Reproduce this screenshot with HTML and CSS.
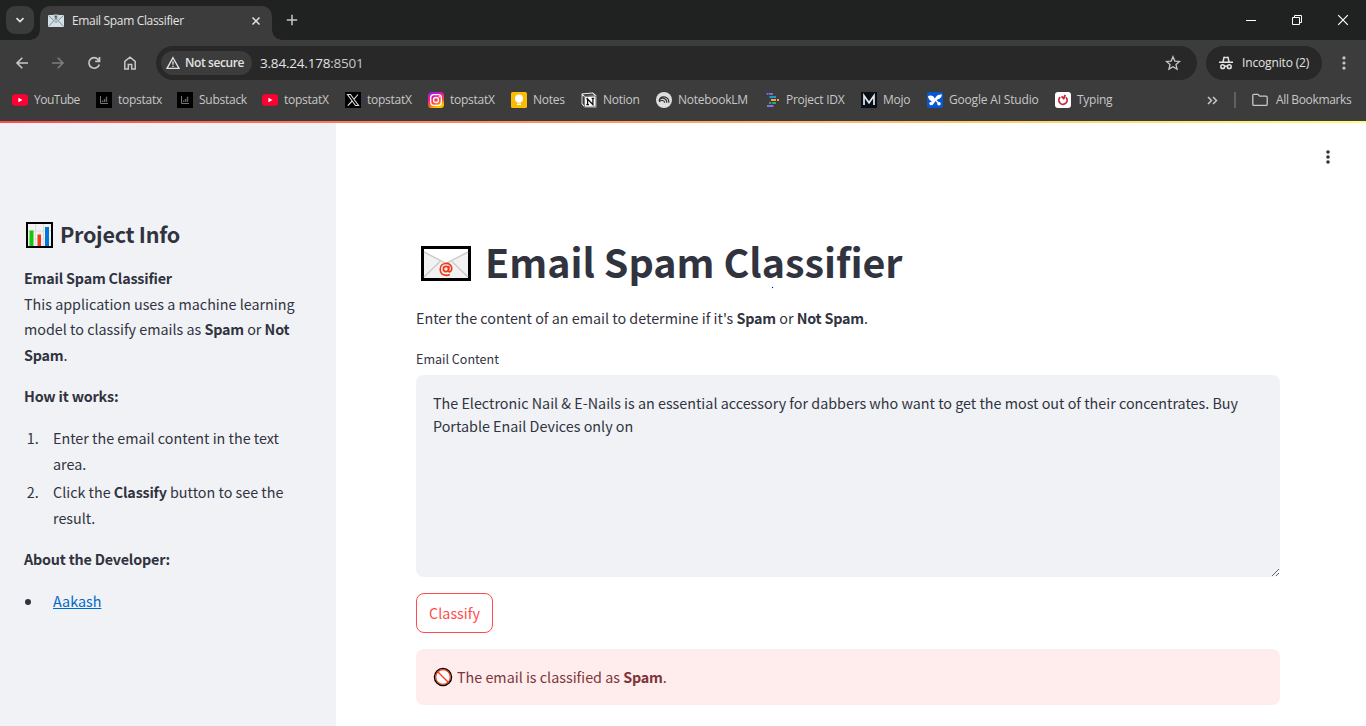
FILE: index.html
```html
<!DOCTYPE html>
<html lang="en">
<head>
<meta charset="utf-8">
<title>Email Spam Classifier</title>
<link rel="stylesheet" href="styles.css">
</head>
<body>
<header class="chrome">
  <div class="titlebar">
    <button class="tab-search" aria-label="Search tabs"><svg width="10" height="10" viewBox="0 0 10 10"><path d="M1.500 3.200 5 6.600 8.500 3.200" fill="none" stroke="#e3e3e3" stroke-width="1.700"/></svg></button>
    <div class="tab">
      <svg width="16" height="16" viewBox="0 0 16 16"><rect y="2" width="16" height="12" rx=".6" fill="#d5e0e6"/><path d="M.5 2.500 8 9.500l7.500-7M.5 13.500l5-5.500m10 5.500-5-5.500" fill="none" stroke="#78909c" stroke-width="1"/><path d="M5.500 1.500h5v4.700L8 8.600 5.500 6.200z" fill="#b9c8d0"/><path d="M8 3v3.500M6.800 3.400h2" stroke="#455a64" stroke-width="1.300"/></svg>
      <span class="tab-title">Email Spam Classifier</span>
      <svg class="tab-close" width="10" height="10" viewBox="0 0 10 10"><path d="m1.500 1.500 7 7m0-7-7 7" stroke="#e3e3e3" stroke-width="1.500"/></svg>
    </div>
    <svg class="new-tab" width="12" height="12" viewBox="0 0 12 12"><path d="M6 .8v10.400M.8 6h10.400" stroke="#c7c7c7" stroke-width="1.500"/></svg>
    <div class="window-controls">
      <svg width="12" height="12" viewBox="0 0 12 12"><path d="M1 6.500h10" stroke="#fff"/></svg>
      <svg width="12" height="12" viewBox="0 0 12 12"><path d="M1.500 3.500h7v7h-7zM3.500 3.500v-2h7v7h-2" fill="none" stroke="#fff"/></svg>
      <svg width="12" height="12" viewBox="0 0 12 12"><path d="m1.200 1.200 9.600 9.600m0-9.600-9.600 9.600" stroke="#fff" stroke-width="1.200"/></svg>
    </div>
  </div>
  <div class="toolbar">
    <nav class="nav">
      <svg width="16" height="16" viewBox="0 0 16 16"><path d="M14 8H3m5.300-5.300L3 8l5.300 5.300" fill="none" stroke="#c7c7c7" stroke-width="1.600"/></svg>
      <svg width="16" height="16" viewBox="0 0 16 16"><path d="M2 8h11M7.700 2.700 13 8l-5.300 5.300" fill="none" stroke="#7d7d7d" stroke-width="1.600"/></svg>
      <svg width="16" height="16" viewBox="0 0 16 16"><path d="M13.300 9.400A5.300 5.300 0 1 1 12.400 4.700L13 5.700M13.500 2v4.300H9.200" fill="none" stroke="#c7c7c7" stroke-width="1.700"/></svg>
      <svg width="16" height="16" viewBox="0 0 16 16"><path d="M2.800 14V6.300L8 2.200l5.200 4.100V14H9.700V9.500H6.300V14z" fill="none" stroke="#c7c7c7" stroke-width="1.500"/></svg>
    </nav>
    <div class="omnibox">
      <span class="security"><svg width="14" height="14" viewBox="0 0 14 14"><path d="M7 1.700 13 12.400H1z" fill="none" stroke="#e3e3e3" stroke-width="1.300"/><path d="M7 5.300v3.500m0 .9V11" stroke="#e3e3e3" stroke-width="1.300"/></svg><b>Not secure</b></span>
      <span class="url">3.84.24.178<i>:8501</i></span>
      <svg class="star" width="16" height="16" viewBox="0 0 16 16"><path d="m8 1.700 1.850 4.350 4.700.4-3.550 3.100 1.050 4.600L8 11.700l-4.050 2.450L5 9.550l-3.550-3.100 4.700-.4z" fill="none" stroke="#c7c7c7" stroke-width="1.300"/></svg>
    </div>
    <div class="incognito"><svg width="14" height="14" viewBox="0 0 14 14"><path d="M3.300 5.500 4.300 1q.2-.7 1-.5L7 1 8.700.5q.8-.2 1 .5l1 4.500H14V7H0V5.500z" fill="#e3e3e3"/><path d="M5.500 2.200h3L9 5.400H5z" fill="#282828"/><circle cx="3.700" cy="10.700" r="1.900" fill="none" stroke="#e3e3e3" stroke-width="1.500"/><circle cx="10.300" cy="10.700" r="1.900" fill="none" stroke="#e3e3e3" stroke-width="1.500"/><path d="M5.600 10.400q1.400-.8 2.800 0" fill="none" stroke="#e3e3e3" stroke-width="1.300"/></svg><span>Incognito (2)</span></div>
    <svg class="menu" width="4" height="14" viewBox="0 0 4 14" fill="#c7c7c7"><circle cx="2" cy="1.900" r="1.600"/><circle cx="2" cy="7" r="1.600"/><circle cx="2" cy="12.100" r="1.600"/></svg>
  </div>
  <div class="bookmarks">
    <div class="bookmark-list">
      <a><svg width="16" height="16" viewBox="0 0 16 16"><rect y="2.300" width="16" height="11.400" rx="3" fill="#ff0033"/><path d="M6.400 5.800 10.500 8l-4.100 2.200z" fill="#fff"/></svg><span>YouTube</span></a>
      <a><svg width="16" height="16" viewBox="0 0 16 16"><path d="M0 0h16v16H0z"/><path d="M4.500 4v7.500H12" fill="none" stroke="#777"/><path d="M6.500 10V8.500m2 1.500V7m2 3V4.800" stroke="#666" stroke-width="1.400"/></svg><span>topstatx</span></a>
      <a><svg width="16" height="16" viewBox="0 0 16 16"><path d="M0 0h16v16H0z"/><path d="M4.500 4v7.500H12" fill="none" stroke="#777"/><path d="M6.500 10V8.500m2 1.500V7m2 3V4.800" stroke="#666" stroke-width="1.400"/></svg><span>Substack</span></a>
      <a><svg width="16" height="16" viewBox="0 0 16 16"><rect y="2.300" width="16" height="11.400" rx="3" fill="#ff0033"/><path d="M6.400 5.800 10.500 8l-4.100 2.200z" fill="#fff"/></svg><span>topstatX</span></a>
      <a><svg width="16" height="16" viewBox="0 0 16 16"><path d="M0 0h16v16H0z"/><path d="M2.500 2.500h3l8 11h-3zM13 2.500 8.800 7.300M7.200 9l-4.400 4.600" fill="none" stroke="#ddd" stroke-width="1.100"/></svg><span>topstatX</span></a>
      <a><svg width="16" height="16" viewBox="0 0 16 16"><defs><linearGradient id="ig" x1="0" y1="0" x2=".4" y2="1"><stop stop-color="#6a2cff"/><stop offset=".4" stop-color="#f0149c"/><stop offset=".75" stop-color="#ff5327"/><stop offset="1" stop-color="#ffc400"/></linearGradient></defs><rect width="16" height="16" rx="3.500" fill="url(#ig)"/><rect x="2.700" y="2.700" width="10.600" height="10.600" rx="3" fill="none" stroke="#fff" stroke-width="1.300"/><circle cx="8" cy="8" r="2.500" fill="none" stroke="#fff" stroke-width="1.300"/><circle cx="11.200" cy="4.800" r=".7" fill="#fff"/></svg><span>topstatX</span></a>
      <a><svg width="16" height="16" viewBox="0 0 16 16"><rect width="16" height="16" rx="1.500" fill="#fbbc04"/><circle cx="8" cy="6.500" r="4" fill="#fff"/><path d="M6 8h4v2.500H6zm0 3.500h4V13H6z" fill="#fff"/></svg><span>Notes</span></a>
      <a><svg width="16" height="16" viewBox="0 0 16 16"><path d="m.6 1.400 11.200-.9 3.600 2.900v12l-11.700.1L.6 12z" fill="#fff"/><path d="m1.600 2.300 9.800-.7 2.300 1.800-9.900.5zM1.400 3.300l1.900 1.800v8.700l-1.900-2.300z" fill="#3c3c3c"/><path d="M3.600 4.700 14.900 4v10.900l-11.300.2z" fill="#fff" stroke="#222" stroke-width=".6"/><path d="M6.600 12.500V7l5.300 5.600V6.500M5.300 6.900h1.900m-1.900 5.700h2.700m2.600-6.200h2.600" fill="none" stroke="#111" stroke-width="1.300"/></svg><span>Notion</span></a>
      <a><svg width="16" height="16" viewBox="0 0 16 16"><circle cx="8" cy="8" r="8" fill="#dedede"/><path d="M3.100 9C4 3 12.900 3.600 12.900 10.700M3.300 7.800C6.500 4.500 10.800 6.800 10.800 10.700M3.200 9.800C5.500 7.400 8.600 8.500 8.600 10.700" fill="none" stroke="#333" stroke-width="1.200"/></svg><span>NotebookLM</span></a>
      <a><svg width="16" height="16" viewBox="0 0 16 16"><path d="M4 1.900h4M2 14h6.500" stroke="#8b6cef" stroke-width="1.900"/><path d="M1.500 1h2v1.600h-2z" fill="#8b6cef"/><path d="M4.500 5H11" stroke="#189fdc" stroke-width="1.900"/><path d="M6 8h5m1 0h2" stroke="#ff9b45" stroke-width="1.900"/><path d="M4 11h2.200m1 0H11" stroke="#22ad6d" stroke-width="1.900"/></svg><span>Project IDX</span></a>
      <a><svg width="16" height="16" viewBox="0 0 16 16"><path d="M0 0h16v16H0z" fill="#071018"/><path d="M3 13V3.700l5 7 5-7V13" fill="none" stroke="#e8e8e8" stroke-width="1.700"/></svg><span>Mojo</span></a>
      <a><svg width="16" height="16" viewBox="0 0 16 16"><rect width="16" height="16" rx="2" fill="#0957d0"/><path d="M1 4C4 2.800 6.800 3.600 7.800 6.800 9 3.500 11.500 2.200 15 2.500c-.5 3-2.200 4.600-5 5.200L8.500 9.200 5.500 13l-2.300.3L2 11l3-1.800C2.600 8.600 1.300 6.800 1 4z" fill="#fff"/><path d="m9 8.500 2.200 2.300" stroke="#fff" stroke-width="1.500"/><circle cx="12" cy="11.800" r="1.800" fill="#fff"/></svg><span>Google AI Studio</span></a>
      <a><svg width="16" height="16" viewBox="0 0 16 16"><rect width="16" height="16" rx="3" fill="#fff"/><path d="M5.200 5.200A4.100 4.100 0 1 0 11 5.400M6.500 4.300 8.700 6.400 10.300 3" fill="none" stroke="#c5283d" stroke-width="1.800"/></svg><span>Typing</span></a>
    </div>
    <svg class="more" width="11" height="9" viewBox="0 0 11 9"><path d="M1 1l3.500 3.500L1 8m5-7 3.500 3.500L6 8" fill="none" stroke="#c7c7c7" stroke-width="1.500"/></svg>
    <i class="divider"></i>
    <svg class="folder" width="16" height="14" viewBox="0 0 16 14"><path d="M.8 2.500q0-1.200 1.200-1.200h4l1.600 1.800H14q1.200 0 1.200 1.200v6.900q0 1.200-1.200 1.200H2Q.8 12.400.8 11.200z" fill="none" stroke="#c7c7c7" stroke-width="1.300"/></svg>
    <span class="all">All Bookmarks</span>
  </div>
</header>
<div class="app">
  <aside class="sidebar">
    <h2><svg width="27" height="26" viewBox="0 0 27 26"><path d="M1 1h25v24H1z" fill="#f2f2f2" stroke="#000" stroke-width="2"/><path d="M2 9h23M2 17h23M9.500 2v22M17.500 2v22" stroke="#dcdcdc"/><path d="M3.500 8.500h4V24h-4z" fill="#16c60c"/><path d="M11.500 12.500h3.500V24h-3.500z" fill="#f03a17"/><path d="M19 5h4v19h-4z" fill="#0078d7"/></svg><span>Project Info</span></h2>
    <p><strong>Email Spam Classifier</strong><br>This application uses a machine learning<br>model to classify emails as <strong>Spam</strong> or <strong>Not<br>Spam</strong>.</p>
    <p><strong>How it works:</strong></p>
    <ol><li>Enter the email content in the text<br>area.</li><li>Click the <strong>Classify</strong> button to see the<br>result.</li></ol>
    <p><strong>About the Developer:</strong></p>
    <ul><li><a href="#">Aakash</a></li></ul>
  </aside>
  <main class="main">
    <svg class="app-menu" width="4" height="14" viewBox="0 0 4 14" fill="#31333f"><circle cx="2" cy="2" r="1.800"/><circle cx="2" cy="7" r="1.800"/><circle cx="2" cy="12" r="1.800"/></svg>
    <h1><svg width="50" height="35" viewBox="0 0 50 35"><path d="M1.500 1.500h47v32h-47z" fill="#f2f2f2" stroke="#000" stroke-width="3"/><path d="M3 3h44v2.500L25 17.500 3 5.500z" fill="#fff"/><path d="M3 6l22 11.500L47 6M3 31l16-15.500M47 31 31 15.500" fill="none" stroke="#ccc" stroke-width="1.500"/><circle cx="25" cy="23" r="2.600" fill="none" stroke="#f03a17" stroke-width="1.700"/><path d="M28 19.800l-.5 4.800c-.1 2.300 3.300 1.400 3.300-2 0-7-11.600-7-11.600.6 0 6.300 6.200 7 9.600 5.300" fill="none" stroke="#f03a17" stroke-width="1.600"/></svg><span>Email Spam Classifier</span></h1>
    <i class="speck"></i>
    <p class="intro">Enter the content of an email to determine if it's <strong>Spam</strong> or <strong>Not Spam</strong>.</p>
    <label for="email">Email Content</label>
    <textarea id="email" spellcheck="false">The Electronic Nail &amp; E-Nails is an essential accessory for dabbers who want to get the most out of their concentrates. Buy
Portable Enail Devices only on</textarea>
    <button class="classify">Classify</button>
    <div class="alert"><svg width="20" height="20" viewBox="0 0 20 20"><circle cx="10" cy="10" r="8.500" fill="#fff" stroke="#000" stroke-width="1.500"/><circle cx="10" cy="10" r="7.300" fill="none" stroke="#f03a17" stroke-width="1.200"/><path d="m5 5 10 10" stroke="#f03a17" stroke-width="1.300"/></svg><span>The email is classified as <strong>Spam</strong>.</span></div>
  </main>
</div>
</body>
</html>
```
FILE: styles.css
```css
* { box-sizing: border-box; }
body {
  margin: 0;
  height: 726px;
  overflow: hidden;
  display: flex;
  flex-direction: column;
  background: #fff;
  color: #31333f;
  font: 14.33px/25.6px "Noto Sans CJK SC", "Noto Sans CJK JP", sans-serif;
}
svg { display: block; flex: none; }
button { padding: 0; font: inherit; }
h1, h2, p, ol, ul { margin: 0; }

/* browser frame */
.chrome {
  height: 121px;
  flex: none;
  background: #3c3c3c;
  color: #c7c7c7;
  font: 12px/16px "Open Sans", "Noto Sans", sans-serif;
  white-space: nowrap;
}
.titlebar { height: 40px; display: flex; align-items: center; padding-left: 6px; background: #202221; }
.tab-search { width: 28px; height: 28px; border: 0; border-radius: 9px; background: #3a3b3b; display: grid; place-items: center; }
.tab {
  position: relative;
  width: 232px;
  height: 34px;
  margin: 6px 0 0 6px;
  padding: 0 11px 5px 8px;
  display: flex;
  align-items: center;
  border-radius: 10px 10px 0 0;
  background: #3c3c3c;
  color: #e3e3e3;
}
.tab::before, .tab::after { content: ""; position: absolute; bottom: 0; width: 10px; height: 10px; }
.tab::before { left: -10px; background: radial-gradient(circle at 0 0, transparent 9.500px, #3c3c3c 10px); }
.tab::after { right: -10px; background: radial-gradient(circle at 100% 0, transparent 9.500px, #3c3c3c 10px); }
.tab-title { margin-left: 8px; letter-spacing: -.34px; }
.tab-close { margin-left: auto; }
.new-tab { margin-left: 14px; }
.window-controls { margin-left: auto; display: flex; gap: 34px; padding-right: 17px; }
.toolbar { height: 45px; display: flex; align-items: center; padding: 0 20px 0 14px; }
.nav { display: flex; gap: 20px; width: 142px; }
.omnibox { width: 1041px; height: 34px; border-radius: 17px; background: #282828; display: flex; align-items: center; padding: 0 16px 0 5px; }
.security { width: 91px; height: 24px; border-radius: 12px; background: #3c3c3c; color: #e3e3e3; display: flex; align-items: center; gap: 5px; padding-left: 5px; }
.security b { font-weight: 600; letter-spacing: -.4px; }
.url { margin-left: 8px; font-size: 13.500px; color: #e3e3e3; letter-spacing: -.2px; }
.url i { font-style: normal; color: #c7c7c7; }
.star { margin-left: auto; }
.incognito { width: 116px; height: 34px; margin-left: 9px; padding-left: 13px; border-radius: 17px; background: #282828; color: #e3e3e3; display: flex; align-items: center; gap: 9px; letter-spacing: -.15px; }
.menu { margin-left: auto; }
.bookmarks { height: 36px; display: flex; align-items: center; padding: 0 0 6px 12px; }
.bookmark-list { flex: none; display: grid; grid-template-columns: 84px 81px 85px 83px 83px 83px 70px 75px 109px 96px 66px 128px 60px; letter-spacing: -.26px; }
.bookmark-list a { display: flex; align-items: center; gap: 6px; }
.bookmark-list a:first-child { letter-spacing: -.5px; }
.bookmark-list a:nth-child(10) { gap: 5px; }
.bookmark-list a:nth-child(12) { letter-spacing: -.18px; }
.more { margin-left: 92px; }
.divider { flex: none; width: 2px; height: 16px; margin-left: 16px; background: #606060; }
.folder { margin-left: 16px; }
.all { margin-left: 8px; letter-spacing: -.36px; }

/* app */
.app { flex: 1; display: flex; border-top: 2px solid; border-image: linear-gradient(90deg, #ff4b4b, #fffd80) 1; }
strong { font-weight: 600; letter-spacing: -.19px; }
.sidebar { width: 336px; padding: 97px 24px 0; background: #f0f2f6; white-space: nowrap; }
.sidebar h2 { height: 29px; margin-bottom: 16px; padding-left: 2px; display: flex; align-items: center; gap: 7px; font-size: 21.500px; line-height: 29px; font-weight: 600; letter-spacing: -.27px; }
.sidebar h2 span { margin-top: -3px; }
.sidebar p, .sidebar ol { margin-bottom: 16px; }
.sidebar ol { padding-left: 29px; }
.sidebar ol li::marker { content: counter(list-item) ".\2003"; }
.sidebar ul { padding-left: 19px; }
.sidebar ul li { padding-left: 10px; }
.sidebar li + li { margin-top: 3px; }
.sidebar a { color: #0068c9; }
.main { position: relative; flex: 1; padding: 114px 86px 0 80px; }
.app-menu { position: absolute; top: 27px; right: 36px; }
.main h1 { height: 53px; padding-left: 5px; display: flex; align-items: center; gap: 14px; font-size: 39.400px; line-height: 53px; font-weight: 700; white-space: nowrap; }
.main h1 span { margin-top: -6px; }
.speck { position: absolute; left: 436px; top: 164px; width: 1px; height: 1px; background: #0000ff; box-shadow: 0 0 1px #0000ff; }
.intro { margin-top: 15px; }
label { display: block; height: 22px; margin-top: 17px; font-size: 12.540px; line-height: 22px; }
textarea { display: block; width: 864px; height: 202px; margin-top: 5px; padding: 16px 17px; border: 0; border-radius: 8px; background: #f0f2f6; color: #31333f; font: 14.33px/23px "Noto Sans CJK SC", "Noto Sans CJK JP", sans-serif; white-space: pre; overflow: hidden; resize: vertical; }
.classify { display: block; width: 77px; height: 40px; margin-top: 16px; border: 1px solid #ff4b4b; border-radius: 8px; background: #fff; color: #ff4b4b; }
.alert { height: 56px; margin-top: 16px; padding-left: 17px; display: flex; align-items: center; gap: 4px; border-radius: 8px; background: #ffecec; color: #7d353b; }
```
